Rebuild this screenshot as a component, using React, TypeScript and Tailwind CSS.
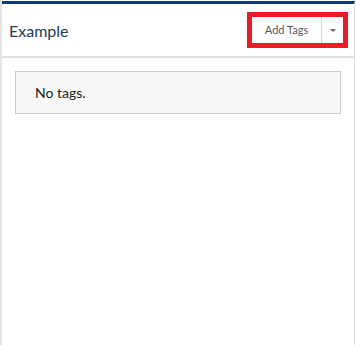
export default function App() {
  return (
    <div className="flex h-[345px] w-[356px] bg-white font-['Lato',sans-serif]">
      <div className="w-[2px] shrink-0 bg-[#e4e4e4]" />
      <div className="flex flex-1 flex-col pt-[1px]">
        <div className="flex flex-1 flex-col border-r border-[#dcdcdc] border-t-[3px] border-t-[#0c3c72]">
          {/* header */}
          <div className="flex h-[54px] items-center justify-between border-b-2 border-[#e0e0e0] pl-[7px] pr-[6px]">
            <span className="pt-[2px] text-[16px] text-[#213a58]">Example</span>
            <div className="border-[5px] border-[#ec1c24]">
              <div className="flex h-[26px] items-stretch bg-white">
                <button className="w-[69px] text-[11px] text-[#555]">Add Tags</button>
                <div className="w-px bg-[#d6d6d6]" />
                <button className="flex w-[21px] items-center justify-center">
                  <span className="block h-0 w-0 border-x-[3px] border-t-[3px] border-x-transparent border-t-[#666]" />
                </button>
              </div>
            </div>
          </div>
          {/* body */}
          <div className="px-[13px] pt-[13px]">
            <div className="flex h-[43px] items-center border border-[#cccccc] bg-[#f7f7f7] pl-[19px] text-[14px] text-[#222]">
              No tags.
            </div>
          </div>
        </div>
      </div>
      <div className="w-px shrink-0 bg-white" />
    </div>
  );
}
